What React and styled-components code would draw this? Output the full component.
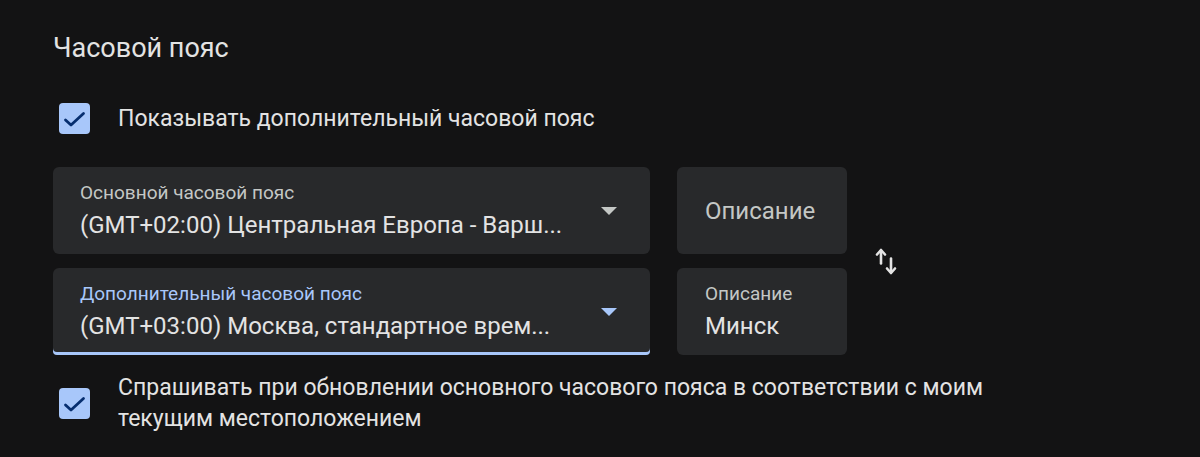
import React from "react";
import styled, { createGlobalStyle } from "styled-components";

const GlobalStyle = createGlobalStyle`
  html, body {
    margin: 0;
    padding: 0;
    background: #131314;
  }
  body {
    font-family: Roboto, "Noto Sans", "Liberation Sans", sans-serif;
    color: #e3e3e3;
  }
`;

const Page = styled.div`
  padding: 34px 0 0 53px;
  box-sizing: border-box;
  width: 1200px;
  height: 457px;
  overflow: hidden;
`;

const Title = styled.h2`
  margin: 0;
  font-size: 27px;
  line-height: 28px;
  font-weight: 400;
  color: #e3e3e3;
`;

const CheckRow = styled.label`
  display: flex;
  align-items: center;
  margin-top: ${(p) => p.$top}px;
  padding-left: 6px;
  gap: 28px;
`;

const Box = styled.span`
  flex: none;
  width: 31px;
  height: 31px;
  border-radius: 4px;
  background: #a8c7fa;
  display: flex;
  align-items: center;
  justify-content: center;
`;

const CheckText = styled.span`
  font-size: 23px;
  line-height: 31px;
  color: #e3e3e3;
  max-width: ${(p) => p.$max || 1000}px;
`;

const Fields = styled.div`
  display: flex;
  align-items: center;
  margin-top: 33px;
`;

const Grid = styled.div`
  display: grid;
  grid-template-columns: 597px 170px;
  grid-auto-rows: 87px;
  column-gap: 27px;
  row-gap: 14px;
`;

const Select = styled.div`
  display: flex;
  align-items: center;
  background: #28292b;
  padding: 0 33px 0 27px;
  box-sizing: border-box;
  box-shadow: ${(p) => (p.$active ? "inset 0 -3px 0 #a8c7fa" : "none")};
  border-radius: ${(p) => (p.$active ? "6px 6px 4px 4px" : "6px")};
`;

const FieldBody = styled.div`
  flex: 1;
  min-width: 0;
  display: flex;
  flex-direction: column;
  justify-content: center;
  gap: 7px;
`;

const FieldLabel = styled.div`
  font-size: 19px;
  line-height: 22px;
  color: ${(p) => (p.$active ? "#a8c7fa" : "#c4c7c5")};
  white-space: nowrap;
`;

const FieldValue = styled.div`
  font-size: 24px;
  line-height: 28px;
  color: #e3e3e3;
  white-space: nowrap;
  overflow: hidden;
`;

const Arrow = styled.span`
  flex: none;
  width: 0;
  height: 0;
  border-left: 8px solid transparent;
  border-right: 8px solid transparent;
  border-top: 8px solid ${(p) => (p.$active ? "#a8c7fa" : "#c4c7c5")};
  margin-left: 16px;
`;

const Desc = styled.div`
  background: #28292b;
  border-radius: 6px;
  padding: 0 16px 0 28px;
  display: flex;
  flex-direction: column;
  justify-content: center;
  gap: 7px;
`;

const Placeholder = styled.div`
  font-size: 24px;
  line-height: 28px;
  color: #c4c7c5;
`;

const Swap = styled.button`
  margin-left: 27px;
  padding: 0;
  border: 0;
  background: none;
  width: 24px;
  height: 27px;
  display: flex;
  color: #e3e3e3;
`;

function Check() {
  return (
    <Box>
      <svg width="31" height="31" viewBox="0 0 31 31" fill="none">
        <polyline
          points="6.5,17 12,22 24.5,10.5"
          stroke="#062e6f"
          strokeWidth="2.8"
          strokeLinecap="round"
          strokeLinejoin="round"
        />
      </svg>
    </Box>
  );
}

function SwapIcon() {
  return (
    <svg width="24" height="27" viewBox="0 0 24 27" fill="none" stroke="currentColor" strokeWidth="2.6" strokeLinecap="round" strokeLinejoin="round">
      <path d="M7 2.5V15.5" />
      <path d="M3 6.5L7 2L11 6.5" />
      <path d="M17 10.5V24.5" />
      <path d="M13 20.5L17 25L21 20.5" />
    </svg>
  );
}

export default function App() {
  return (
    <>
      <GlobalStyle />
      <Page>
        <Title>Часовой пояс</Title>
        <CheckRow $top={41}>
          <Check />
          <CheckText>Показывать дополнительный часовой пояс</CheckText>
        </CheckRow>
        <Fields>
          <Grid>
            <Select>
              <FieldBody>
                <FieldLabel>Основной часовой пояс</FieldLabel>
                <FieldValue>(GMT+02:00) Центральная Европа - Варш...</FieldValue>
              </FieldBody>
              <Arrow />
            </Select>
            <Desc>
              <Placeholder>Описание</Placeholder>
            </Desc>
            <Select $active>
              <FieldBody>
                <FieldLabel $active>Дополнительный часовой пояс</FieldLabel>
                <FieldValue>(GMT+03:00) Москва, стандартное врем...</FieldValue>
              </FieldBody>
              <Arrow $active />
            </Select>
            <Desc>
              <FieldLabel>Описание</FieldLabel>
              <FieldValue>Минск</FieldValue>
            </Desc>
          </Grid>
          <Swap aria-label="Поменять местами">
            <SwapIcon />
          </Swap>
        </Fields>
        <CheckRow $top={17}>
          <Check />
          <CheckText $max={930}>
            Спрашивать при обновлении основного часового пояса в соответствии с моим текущим местоположением
          </CheckText>
        </CheckRow>
      </Page>
    </>
  );
}
